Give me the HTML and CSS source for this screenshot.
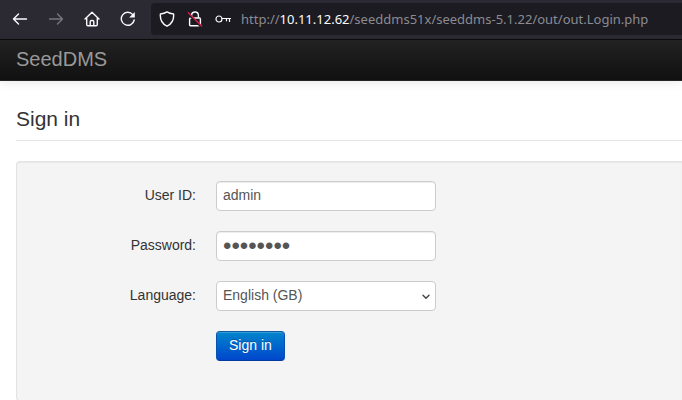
FILE: index.html
```html
<!DOCTYPE html>
<html lang="en">
<head>
<meta charset="utf-8">
<title>SeedDMS: Sign in</title>
<link rel="stylesheet" href="styles.css">
</head>
<body>
<header class="toolbar">
  <nav class="toolbar-nav" aria-label="Browser">
    <button class="tool" type="button" aria-label="Back"><svg viewBox="0 0 16 16"><path d="M14.500 8H1.500M6.500 3 1.500 8l5 5"/></svg></button>
    <button class="tool" type="button" aria-label="Forward" disabled><svg viewBox="0 0 16 16"><path d="M1.500 8h13M9.500 3l5 5-5 5"/></svg></button>
    <button class="tool" type="button" aria-label="Home"><svg viewBox="0 0 16 16"><path d="M1 8 8 1.300 15 8M2.700 7v6.500q0 1.200 1.200 1.200h8.200q1.200 0 1.200-1.200V7M6.200 14.500v-3.700q0-1.300 1.300-1.300h1q1.300 0 1.300 1.300v3.700"/></svg></button>
    <button class="tool" type="button" aria-label="Reload"><svg viewBox="0 0 16 16"><path d="M14.200 9A6.500 6.500 0 1 1 12.800 3.600"/><path class="solid" d="M14.800 1v5.600H9.200z"/></svg></button>
  </nav>
  <div class="address">
    <div class="address-icons">
      <svg class="address-icon" viewBox="0 0 16 16"><path d="M8 .9C6.200 2.100 3.700 2.800 1.400 3c-.5 5.500 1.600 9.800 6.600 12.200C13 12.800 15.100 8.500 14.600 3 12.300 2.800 9.800 2.100 8 .9z"/></svg>
      <svg class="address-icon" viewBox="0 0 16 16"><path d="M4.600 7V4.400a3.400 3.400 0 0 1 6.800 0V7M3.600 7h8.800q1 0 1 1v5.800q0 1-1 1H3.600q-1 0-1-1V8q0-1 1-1z"/><path class="gap" d="M.8 2.500 13.800 15.500"/><path class="slash" d="M1.300 1.800 14.700 15"/></svg>
      <svg class="address-icon thin" viewBox="0 0 16 16"><circle cx="4" cy="8" r="3"/><path d="M7 7.500h8.500M11.500 7.500v2.300M14.500 7.500v3"/></svg>
    </div>
    <span class="url">http://<span class="host">10.11.12.62</span>/seeddms51x/seeddms-5.1.22/out/out.Login.php</span>
  </div>
</header>
<div class="navbar"><a class="brand" href="#">SeedDMS</a></div>
<main class="content">
  <h1 class="legend">Sign in</h1>
  <form class="well">
    <div class="row"><label for="login">User ID:</label><input class="field" id="login" type="text" value="admin"></div>
    <div class="row"><label for="pwd">Password:</label><input class="field password" id="pwd" type="password" value="password"></div>
    <div class="row"><label for="lang">Language:</label>
      <div class="select-wrap">
        <select class="field" id="lang"><option>English (GB)</option></select>
        <svg class="chevron" viewBox="0 0 8 6"><path d="M1 1.200 4 4.200l3-3"/></svg>
      </div>
    </div>
    <div class="row"><span></span><button class="submit" type="button">Sign in</button></div>
  </form>
</main>
</body>
</html>
```
FILE: styles.css
```css
* { box-sizing: border-box; }
html { overflow: hidden; }
body {
  margin: 0;
  background: #fff;
  color: #333;
  font: 14px/20px "Liberation Sans", Arial, sans-serif;
}
svg { fill: none; stroke: currentColor; stroke-width: 1.4; stroke-linecap: round; stroke-linejoin: round; }
.toolbar {
  display: flex;
  align-items: center;
  height: 40px;
  padding: 2px 0 4px 12px;
  gap: 15px;
  background: #2b2a33;
  border-bottom: 1px solid #0c0c0d;
  color: #fbfbfe;
}
.toolbar-nav { display: flex; gap: 20px; }
.tool {
  width: 16px;
  height: 16px;
  padding: 0;
  border: 0;
  background: none;
  color: inherit;
}
.tool:disabled { color: #77767c; }
.tool svg { display: block; width: 16px; height: 16px; }
.solid { fill: currentColor; stroke: none; }
.address {
  flex: 1;
  display: flex;
  align-items: center;
  gap: 10px;
  height: 32px;
  padding-left: 8px;
  background: #1c1b22;
  border-radius: 4px 0 0 4px;
  white-space: nowrap;
}
.address-icons { display: flex; gap: 12px; }
.address-icon { flex: none; width: 16px; height: 16px; }
.thin { stroke-width: 1.2; }
.gap { stroke: #1c1b22; stroke-width: 2; }
.slash { stroke: #e21c48; stroke-width: 1.3; }
.url { color: #8b8b91; font: 13px/20px "Noto Sans", sans-serif; }
.host { color: #fbfbfe; }
.navbar {
  height: 41px;
  padding: 9px 16px;
  background: linear-gradient(#222, #111);
  border-bottom: 1px solid #252525;
  box-shadow: 0 1px 10px rgba(0, 0, 0, .1);
}
.brand { color: #999; font-size: 20px; text-decoration: none; }
.content { margin-left: 16px; padding-top: 18px; }
.legend {
  margin: 0 0 20px;
  padding-bottom: 2px;
  border-bottom: 1px solid #e5e5e5;
  font-size: 21px;
  font-weight: 400;
  line-height: 39px;
}
.well {
  display: grid;
  gap: 20px;
  padding: 19px 19px 39px;
  background: #f4f4f4;
  border: 1px solid #e3e3e3;
  border-right: 0;
  border-radius: 4px 0 0 4px;
  box-shadow: inset 0 1px 1px rgba(0, 0, 0, .05);
}
.row {
  display: grid;
  grid-template-columns: 160px 220px;
  gap: 20px;
  height: 30px;
}
.row label { padding-top: 4px; text-align: right; }
.field {
  width: 100%;
  height: 30px;
  padding: 3px 6px 5px;
  border: 1px solid #ccc;
  border-radius: 4px;
  background: #fff;
  box-shadow: inset 0 1px 1px rgba(0, 0, 0, .075);
  color: #555;
  font: inherit;
  appearance: none;
}
.password { padding-top: 4px; padding-bottom: 4px; font-size: 24px; }
.select-wrap { position: relative; }
select.field { box-shadow: none; }
.chevron {
  position: absolute;
  right: 6px;
  top: 13px;
  width: 8px;
  height: 6px;
  color: #444;
  pointer-events: none;
}
.submit {
  justify-self: start;
  height: 30px;
  padding: 3px 12px 5px;
  border: 1px solid;
  border-color: #0a58a0 #0a50b0 #003a9c;
  border-radius: 4px;
  background: linear-gradient(#08c, #04c) border-box;
  box-shadow: inset 0 1px 0 rgba(255, 255, 255, .2);
  color: #fff;
  font: inherit;
  text-shadow: 0 -1px 0 rgba(0, 0, 0, .25);
}
```
